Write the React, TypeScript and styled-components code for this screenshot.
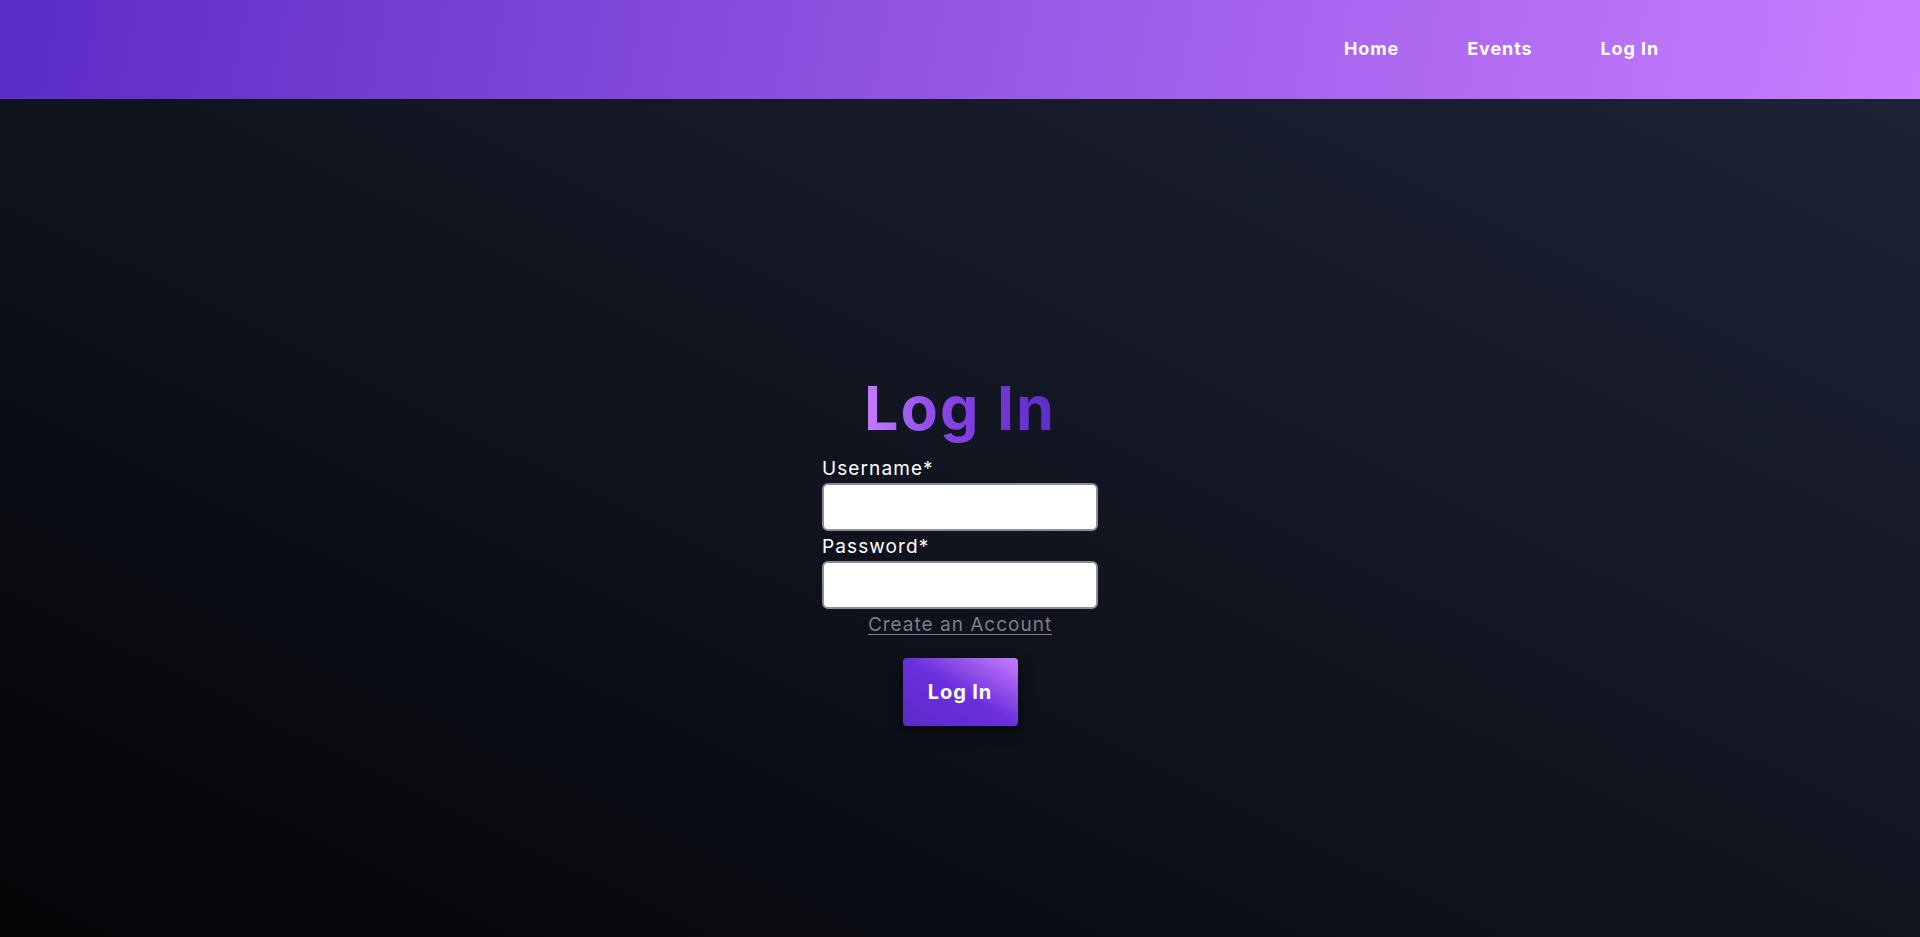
import React from "react";
import styled, { createGlobalStyle } from "styled-components";

const GlobalStyle = createGlobalStyle`
  html, body { margin: 0; padding: 0; height: 100%; }
  body { font-family: Inter, "Noto Sans", Arial, sans-serif; }
  #root { min-height: 100vh; display: flex; flex-direction: column; }
`;

const Page = styled.div`
  min-height: 100vh;
  display: flex;
  flex-direction: column;
  background: linear-gradient(to top right, #030406 0%, #111520 50%, #1f2438 100%);
`;

const Header = styled.header`
  height: 99px;
  display: flex;
  align-items: center;
  justify-content: flex-end;
  padding-right: 261px;
  background: linear-gradient(100deg, #5a2bc6 0%, #9a5be6 55%, #c97dff 100%);
`;

const Nav = styled.nav`
  display: flex;
  gap: 68px;
  margin-top: -2px;
`;

const NavLink = styled.a`
  color: #ffffff;
  font-weight: 700;
  font-size: 18px;
  text-decoration: none;
  letter-spacing: 0.9px;
  cursor: pointer;
`;

const Main = styled.main`
  flex: 1;
  display: flex;
  justify-content: center;
  padding-top: 273px;
`;

const Form = styled.form`
  width: 276px;
  display: flex;
  flex-direction: column;
`;

const Title = styled.h1`
  align-self: center;
  margin: 0 0 12px;
  font-size: 61px;
  line-height: 72px;
  font-weight: 700;
  text-align: center;
  letter-spacing: 2px;
  background: linear-gradient(to right, #c77dff 0%, #8a45e6 40%, #5b2bc8 100%);
  -webkit-background-clip: text;
  background-clip: text;
  color: transparent;
`;

const Label = styled.label<{ $gap?: number }>`
  color: #ffffff;
  font-size: 19px;
  line-height: 26px;
  letter-spacing: 1.1px;
  margin-top: ${(p) => p.$gap ?? 0}px;
`;

const Input = styled.input`
  box-sizing: border-box;
  width: 276px;
  height: 48px;
  margin-top: 1px;
  border: 2px solid #8b8e95;
  border-radius: 6px;
  background: #ffffff;
  font-size: 18px;
  padding: 0 10px;
  outline: none;
`;

const CreateLink = styled.a`
  align-self: center;
  margin-top: 3px;
  color: #7e7e86;
  font-size: 19px;
  line-height: 26px;
  letter-spacing: 1px;
  text-decoration: underline;
  text-underline-offset: 3px;
  cursor: pointer;
`;

const Button = styled.button`
  align-self: center;
  margin-top: 20px;
  width: 115px;
  height: 68px;
  border: none;
  border-radius: 4px;
  color: #ffffff;
  font-family: inherit;
  font-size: 20px;
  font-weight: 700;
  letter-spacing: 0.9px;
  background: linear-gradient(to top right, #5b2bc9 0%, #6a2fdb 50%, #c77dff 100%);
  box-shadow: 0 6px 14px rgba(0, 0, 0, 0.55);
  cursor: pointer;
`;

export default function App() {
  return (
    <>
      <GlobalStyle />
      <Page>
        <Header>
          <Nav>
            <NavLink>Home</NavLink>
            <NavLink>Events</NavLink>
            <NavLink>Log In</NavLink>
          </Nav>
        </Header>
        <Main>
          <Form onSubmit={(e) => e.preventDefault()}>
            <Title>Log In</Title>
            <Label htmlFor="username">Username*</Label>
            <Input id="username" type="text" />
            <Label htmlFor="password" $gap={3}>Password*</Label>
            <Input id="password" type="password" />
            <CreateLink>Create an Account</CreateLink>
            <Button type="submit">Log In</Button>
          </Form>
        </Main>
      </Page>
    </>
  );
}
